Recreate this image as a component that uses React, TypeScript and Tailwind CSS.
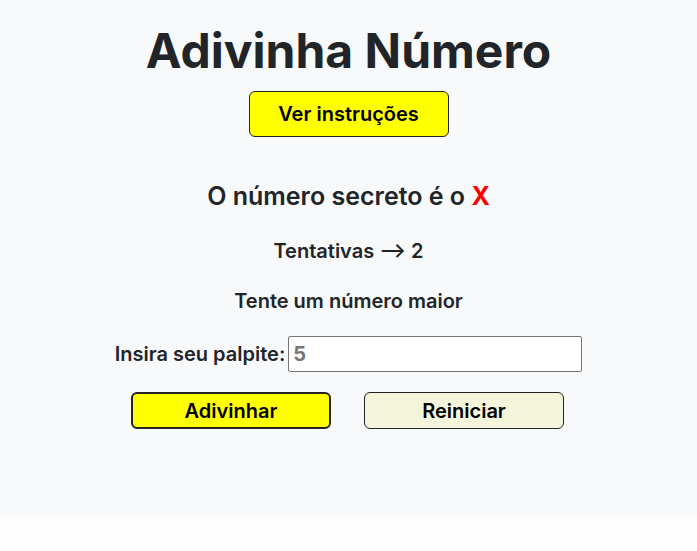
import React, { useState } from "react";

export default function App() {
  const [palpite, setPalpite] = useState("5");

  return (
    <div className="min-h-[551px] bg-[#fdfdfd] font-['Inter',sans-serif] text-[#212529]">
      <div className="h-[519px] bg-[#f8f9fa] flex flex-col items-center pt-[21px]">
        <h1 className="text-[48px] leading-[60px] font-bold">Adivinha Número</h1>

        <button className="mt-[10px] w-[200px] h-[46px] bg-[#ffff00] border border-[#222] rounded-md text-[20px] font-semibold text-black">
          Ver instruções
        </button>

        <h2 className="mt-[42px] text-[25px] font-semibold leading-[34px]">
          O número secreto é o <span className="text-[#ff0000] font-bold">X</span>
        </h2>

        <p className="mt-[24px] text-[20px] leading-[28px] font-semibold">
          Tentativas ⟶ 2
        </p>

        <p className="mt-[22px] text-[20px] leading-[28px] font-semibold">Tente um número maior</p>

        <div className="mt-[21px] flex items-center gap-[3px]">
          <label className="text-[20px] font-semibold">Insira seu palpite:</label>
          <input
            value={palpite}
            onChange={(e) => setPalpite(e.target.value)}
            className="w-[294px] h-[36px] bg-white border border-[#767676] rounded-[2px] px-[4px] text-[20px] font-bold text-[#777] outline-none"
          />
        </div>

        <div className="mt-[20px] flex gap-[33px] ml-[-2px]">
          <button className="w-[200px] h-[37px] bg-[#ffff00] border-2 border-[#222] rounded-md text-[20px] font-semibold text-black">
            Adivinhar
          </button>
          <button className="w-[200px] h-[37px] bg-[#f5f5dc] border border-[#222] rounded-md text-[20px] font-semibold text-black">
            Reiniciar
          </button>
        </div>
      </div>
    </div>
  );
}
